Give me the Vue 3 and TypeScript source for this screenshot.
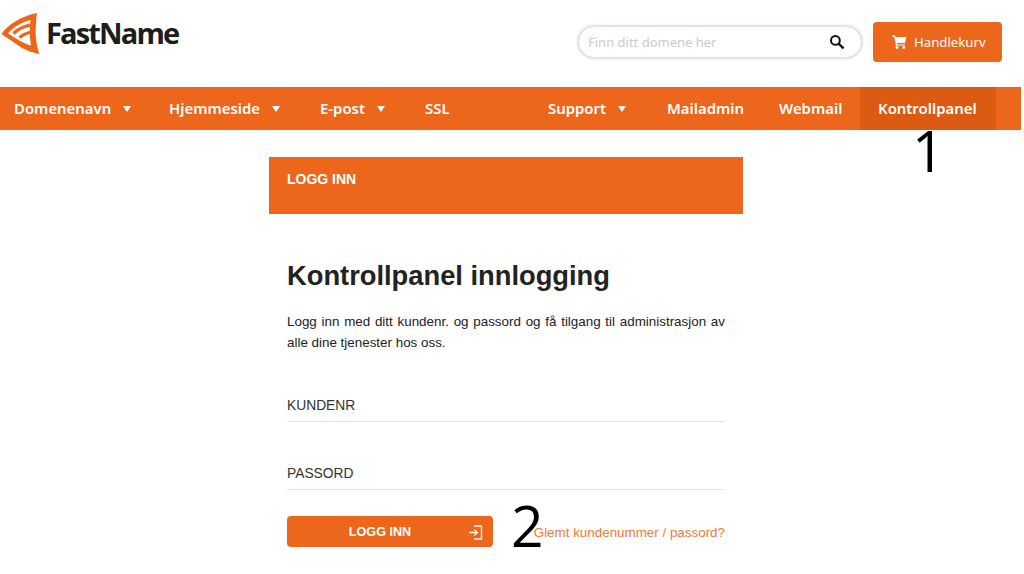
<template>
  <div class="page">
    <header class="top">
      <a class="logo">
        <svg class="logo-mark" width="44" height="44" viewBox="0 0 44 44">
          <path d="M37 1 C36.5 6 36 9 36 13 C35 21 36 33 39.5 42 C32 40.5 27 38.5 22 36 L1.5 22 C8 12 22 4 37 1 Z" fill="#ec661c" />
          <path d="M8 21.5 C13 15.5 21 10.5 30.5 8 C29.5 16 29.5 25 31 33.5 C27 32.5 24.5 31 21 29.5 Z" fill="#fff" />
          <path d="M13.5 21.5 C17.5 17.5 23 14.8 30 13.2" fill="none" stroke="#ec661c" stroke-width="3.4" />
          <path d="M19.5 25.5 C22.5 22.8 26 21.3 30 20.3" fill="none" stroke="#ec661c" stroke-width="3.2" />
        </svg>
        <span class="logo-text">FastName</span>
      </a>
      <div class="top-right">
        <div class="search">
          <span class="placeholder">Finn ditt domene her</span>
          <svg width="16" height="16" viewBox="0 0 16 16">
            <circle cx="6.4" cy="6.4" r="4.4" fill="none" stroke="#111" stroke-width="2" />
            <path d="M9.8 9.8 L14.6 14.4" stroke="#111" stroke-width="2.4" />
          </svg>
        </div>
        <button class="cart">
          <svg width="15" height="14" viewBox="0 0 15 14">
            <path d="M0 .5 H3 L3.6 2 H14.5 L13 8 H5 L5.3 9.4 H13 V10.6 H4 L2.2 1.8 H0 Z" fill="#fff" />
            <circle cx="5" cy="12.5" r="1.4" fill="#fff" />
            <circle cx="11.8" cy="12.5" r="1.4" fill="#fff" />
          </svg>
          Handlekurv
        </button>
      </div>
    </header>

    <nav class="nav">
      <div class="nav-left">
        <a v-for="item in leftItems" :key="item.label" class="nav-item" :style="{ width: item.w + 'px' }">
          {{ item.label }}
          <i v-if="item.caret" class="caret" />
        </a>
      </div>
      <div class="nav-right">
        <a v-for="item in rightItems" :key="item.label" class="nav-item" :class="{ active: item.active }" :style="{ width: item.w + 'px' }">
          {{ item.label }}
          <i v-if="item.caret" class="caret" />
        </a>
      </div>
    </nav>

    <main class="main">
      <section class="login">
        <div class="login-head">LOGG INN</div>
        <div class="login-body">
          <h1>Kontrollpanel innlogging</h1>
          <p>Logg inn med ditt kundenr. og passord og få tilgang til administrasjon av alle dine tjenester hos oss.</p>
          <div class="field">KUNDENR</div>
          <div class="field">PASSORD</div>
          <div class="actions">
            <button class="submit">
              LOGG INN
              <svg class="submit-icon" width="15" height="15" viewBox="0 0 15 15">
                <path d="M6 1 H13.5 V14 H6" fill="none" stroke="#fff" stroke-width="1.3" />
                <path d="M1 7.5 H9 M6.2 4.4 L9.4 7.5 L6.2 10.6" fill="none" stroke="#fff" stroke-width="1.3" />
              </svg>
            </button>
            <a class="forgot">Glemt kundenummer / passord?</a>
          </div>
        </div>
      </section>
    </main>

    <!-- Numbers drawn on top of the screenshot -->
    <span class="mark mark-1">1</span>
    <span class="mark mark-2">2</span>
  </div>
</template>

<script setup lang="ts">
interface NavItem {
  label: string
  w: number
  caret?: boolean
  active?: boolean
}

const leftItems: NavItem[] = [
  { label: 'Domenenavn', w: 155, caret: true },
  { label: 'Hjemmeside', w: 151, caret: true },
  { label: 'E-post', w: 105, caret: true },
  { label: 'SSL', w: 64 },
]

const rightItems: NavItem[] = [
  { label: 'Support', w: 119, caret: true },
  { label: 'Mailadmin', w: 112 },
  { label: 'Webmail', w: 95 },
  { label: 'Kontrollpanel', w: 136, active: true },
]
</script>

<style>
html, body {
  margin: 0;
  background: #fff;
  overflow: hidden;
}
</style>

<style scoped>
.page {
  position: relative;
  width: 1024px;
  height: 574px;
  overflow: hidden;
  font-family: "Liberation Sans", Arial, sans-serif;
  background: #fff;
}

.top {
  display: flex;
  justify-content: space-between;
  height: 87px;
  box-sizing: border-box;
  padding-right: 22px;
}

.logo {
  display: flex;
  align-items: flex-start;
  padding-top: 12px;
}
.logo-mark { flex: none; }
.logo-text {
  margin-left: 2px;
  margin-top: 2px;
  font-family: "Open Sans", sans-serif;
  font-size: 29px;
  line-height: 38px;
  font-weight: 700;
  letter-spacing: -1.85px;
  color: #1d1d1b;
}

.top-right {
  display: flex;
  align-items: flex-start;
  gap: 11px;
  padding-top: 22px;
}

.search {
  display: flex;
  align-items: center;
  justify-content: space-between;
  box-sizing: border-box;
  width: 284px;
  height: 32px;
  margin-top: 3.5px;
  padding: 0 16px 0 9px;
  background: #fff;
  border: 1px solid #e2e2e2;
  border-radius: 16px;
  box-shadow: 0 0 3px rgba(0, 0, 0, 0.28);
}
.placeholder {
  font-family: "Noto Sans", sans-serif;
  font-size: 13px;
  color: #cbcbcb;
}

.cart {
  display: flex;
  align-items: center;
  gap: 7px;
  width: 129px;
  height: 40px;
  padding: 0 0 0 19px;
  border: none;
  border-radius: 4px;
  background: #ec661c;
  color: #fff;
  font-family: "Noto Sans", sans-serif;
  font-size: 13.2px;
}

.nav {
  display: flex;
  justify-content: space-between;
  width: 1021px;
  height: 43px;
  background: #ec661c;
}
.nav-left,
.nav-right {
  display: flex;
}
.nav-right { padding-right: 25px; }
.nav-item {
  display: flex;
  align-items: center;
  box-sizing: border-box;
  padding-left: 14px;
  padding-bottom: 2px;
  font-family: "Noto Sans", sans-serif;
  font-size: 14.9px;
  font-weight: 600;
  color: #fff;
  white-space: nowrap;
}
.nav-item.active {
  background: #dc5b12;
  padding-left: 18px;
}
.caret {
  margin: 3px 0 0 12px;
  border-left: 4px solid transparent;
  border-right: 4px solid transparent;
  border-top: 6px solid #fff;
}

.main {
  display: flex;
  padding: 27px 0 0 269px;
}

.login {
  width: 474px;
}
.login-head {
  box-sizing: border-box;
  height: 57px;
  padding: 14px 18px 0;
  background: #ec661c;
  color: #fff;
  font-size: 14px;
  font-weight: 700;
  line-height: 16px;
}
.login-body {
  padding: 45px 18px 0;
}

h1 {
  margin: 0;
  font-size: 27.3px;
  line-height: 34px;
  font-weight: 700;
  color: #222;
}

p {
  margin: 18px 0 42px;
  font-size: 13.4px;
  line-height: 21px;
  color: #222;
  text-align: justify;
}

.field {
  height: 27px;
  box-sizing: border-box;
  border-bottom: 1px solid #e6e6e6;
  font-size: 13.8px;
  line-height: 22px;
  color: #333;
}
.field + .field { margin-top: 41px; }

.actions {
  display: flex;
  align-items: center;
  justify-content: space-between;
  margin-top: 26px;
}

.submit {
  position: relative;
  width: 206px;
  height: 31px;
  padding: 0 20px 0 0;
  border: none;
  border-radius: 4px;
  background: #ec661c;
  color: #fff;
  font-family: "Liberation Sans", Arial, sans-serif;
  font-size: 12.6px;
  font-weight: 700;
}
.submit-icon {
  position: absolute;
  top: 9px;
  right: 10px;
}

.forgot {
  margin-top: 2px;
  font-size: 13.4px;
  color: #f2783a;
}

.mark {
  position: absolute;
  font-family: "Open Sans", sans-serif;
  font-size: 57px;
  line-height: 44px;
  color: #000;
}
.mark-1 { left: 912px; top: 128px; }
.mark-2 { left: 511px; top: 503px; }
</style>
